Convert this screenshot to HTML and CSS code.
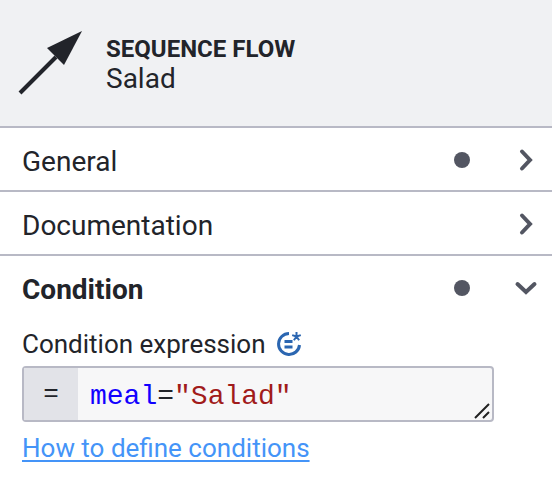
FILE: index.html
```html
<!DOCTYPE html>
<html lang="en">
<head>
<meta charset="utf-8">
<title>Sequence flow properties</title>
<link rel="stylesheet" href="styles.css">
</head>
<body>
<main class="panel">
  <header class="panel-header">
    <svg class="flow-icon" viewBox="0 0 64 64" aria-hidden="true">
      <path d="M2 62 38 26" fill="none" stroke="currentColor" stroke-width="4"/>
      <path d="M64 0 29 17 46 34Z" fill="currentColor"/>
    </svg>
    <div class="heading">
      <h1 class="type">SEQUENCE FLOW</h1>
      <p class="name">Salad</p>
    </div>
  </header>

  <section class="group">
    <button class="group-header" type="button" aria-expanded="false">
      <span class="title">General</span>
      <span class="dot"></span>
      <svg class="arrow" viewBox="0 0 24 24" aria-hidden="true"><path d="m8 3.500 8 8.500-8 8.500"/></svg>
    </button>
  </section>

  <section class="group">
    <button class="group-header" type="button" aria-expanded="false">
      <span class="title">Documentation</span>
      <svg class="arrow" viewBox="0 0 24 24" aria-hidden="true"><path d="m8 3.500 8 8.500-8 8.500"/></svg>
    </button>
  </section>

  <section class="group">
    <button class="group-header open" type="button" aria-expanded="true">
      <span class="title">Condition</span>
      <span class="dot"></span>
      <svg class="arrow" viewBox="0 0 24 24" aria-hidden="true"><path d="m3.500 8 8.500 8 8.500-8"/></svg>
    </button>
    <div class="entry">
      <label class="label" for="expression">Condition expression
        <svg class="feel-icon" viewBox="0 0 26 26" aria-hidden="true">
          <path d="M13 2.500A10.500 10.500 0 1 0 23.500 14M8.500 10.500h8M8.500 16h8"/>
          <path class="star" d="M20.500 1v4.500m0 0-4.300-1.400m4.300 1.400 4.300-1.400m-4.300 1.400-2.600 3.700m2.600-3.700 2.600 3.700"/>
        </svg>
      </label>
      <div class="editor">
        <span class="prefix">=</span>
        <div class="code">
          <pre class="highlight" aria-hidden="true"><span class="variable">meal</span>=<span class="string">"Salad"</span></pre>
          <textarea class="input" id="expression" rows="1" spellcheck="false">meal="Salad"</textarea>
          <svg class="grip" viewBox="0 0 16 16" aria-hidden="true"><path d="M1 15 15 1M9 15l6-6"/></svg>
        </div>
      </div>
      <a class="help" href="#conditions">How to define conditions</a>
    </div>
  </section>
</main>
</body>
</html>
```

FILE: styles.css
```css
* {
  box-sizing: border-box;
}

body {
  margin: 0;
  background: #fff;
  color: #22242a;
  font: 28px/32px Roboto, "Liberation Sans", sans-serif;
}

.panel-header {
  display: flex;
  align-items: center;
  gap: 24px;
  padding: 31px 18px;
  background: #f0f1f3;
  border-bottom: 2px solid #b8b9c5;
}

.flow-icon {
  width: 64px;
  height: 64px;
}

.type,
.name {
  margin: 0;
}

.type {
  font-size: 24px;
  line-height: 32px;
  font-weight: 700;
}

.name {
  line-height: 28px;
}

.group + .group {
  border-top: 2px solid #b8b9c5;
}

.group-header {
  display: flex;
  align-items: center;
  gap: 44px;
  width: 100%;
  padding: 14px 14px 12px 22px;
  border: 0;
  background: none;
  color: inherit;
  font: inherit;
  text-align: left;
}

.open {
  font-weight: 700;
}

.title {
  flex: 1;
  padding-top: 4px;
}

.dot {
  width: 16px;
  height: 16px;
  border-radius: 50%;
  background: #535662;
}

.arrow {
  width: 24px;
  height: 24px;
  fill: none;
  stroke: #535662;
  stroke-width: 4;
  stroke-linecap: round;
}

.entry {
  padding: 10px 58px 14px 22px;
}

.label {
  display: flex;
  align-items: center;
  gap: 10px;
  font-size: 26px;
}

.feel-icon {
  width: 26px;
  height: 26px;
  fill: none;
  stroke: #2b66b1;
  stroke-width: 3;
}

.star {
  stroke-width: 2;
}

.editor {
  display: flex;
  margin: 6px 0 10px;
  border: 2px solid #b8b9c5;
  border-radius: 4px;
  background: #f7f7f8;
  font: 28px/32px "Courier New", "Liberation Mono", monospace;
}

.prefix {
  width: 54px;
  padding: 10px 0;
  background: #e2e3e8;
  font-size: 26px;
  text-align: center;
}

.code {
  position: relative;
  flex: 1;
}

.highlight,
.input {
  margin: 0;
  padding: 13px 12px 7px;
  font: inherit;
}

.variable {
  color: #10f;
}

.string {
  color: #a11b1b;
}

.input {
  position: absolute;
  inset: 0;
  width: 100%;
  border: 0;
  outline: 0;
  background: none;
  color: transparent;
  caret-color: #22242a;
  resize: none;
  overflow: hidden;
}

.grip {
  position: absolute;
  right: 2px;
  bottom: 1px;
  width: 16px;
  height: 16px;
  fill: none;
  stroke: #222;
  stroke-width: 2;
}

.help {
  color: #4494f8;
  font-size: 26px;
  text-decoration-thickness: 2px;
  text-underline-offset: 3px;
}
```
